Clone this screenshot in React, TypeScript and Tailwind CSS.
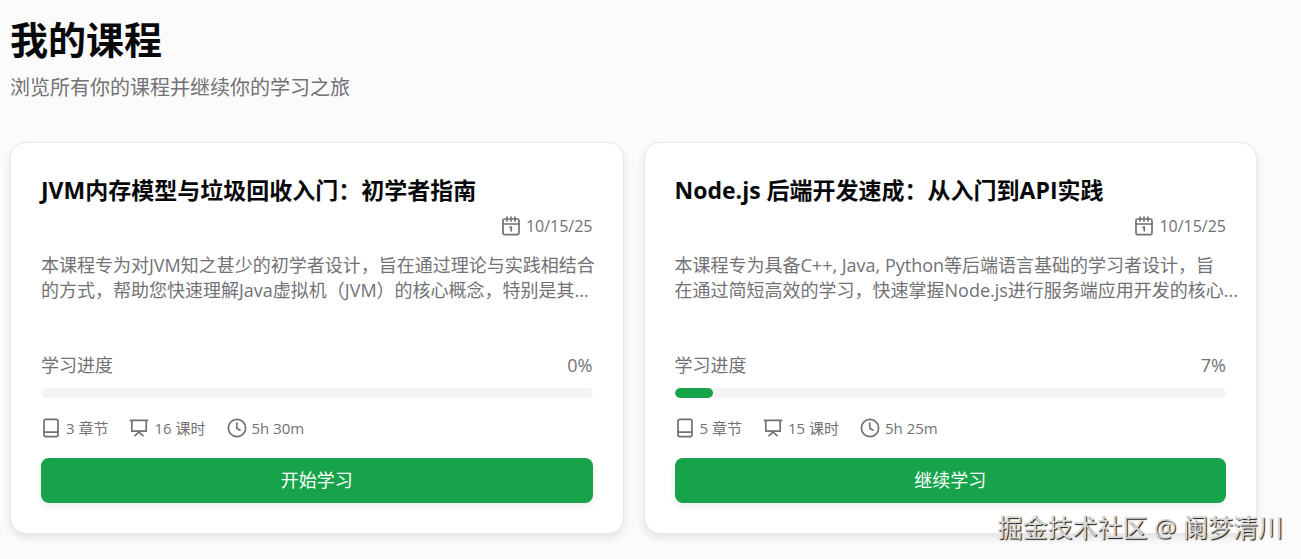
import type { ReactNode } from "react";

type Course = {
  title: string;
  date: string;
  description: string[];
  progress: number;
  chapters: number;
  lessons: number;
  duration: string;
  action: string;
};

const courses: Course[] = [
  {
    title: "JVM内存模型与垃圾回收入门：初学者指南",
    date: "10/15/25",
    description: [
      "本课程专为对JVM知之甚少的初学者设计，旨在通过理论与实践相结合",
      "的方式，帮助您快速理解Java虚拟机（JVM）的核心概念，特别是其...",
    ],
    progress: 0,
    chapters: 3,
    lessons: 16,
    duration: "5h 30m",
    action: "开始学习",
  },
  {
    title: "Node.js 后端开发速成：从入门到API实践",
    date: "10/15/25",
    description: [
      "本课程专为具备C++, Java, Python等后端语言基础的学习者设计，旨",
      "在通过简短高效的学习，快速掌握Node.js进行服务端应用开发的核心...",
    ],
    progress: 7,
    chapters: 5,
    lessons: 15,
    duration: "5h 25m",
    action: "继续学习",
  },
];

function Icon({ children }: { children: ReactNode }) {
  return (
    <svg
      viewBox="0 0 20 20"
      className="size-5 shrink-0"
      fill="none"
      stroke="currentColor"
      strokeWidth="1.7"
      strokeLinecap="round"
      strokeLinejoin="round"
      aria-hidden="true"
    >
      {children}
    </svg>
  );
}

function CalendarIcon() {
  return (
    <Icon>
      <rect x="2" y="3" width="16" height="15.6" rx="1.6" />
      <path d="M2 8h16M6 1v4M10 1v4M14 1v4" />
      <path d="M9 11.4l1.3-.3v3.7" />
    </Icon>
  );
}

function BookIcon() {
  return (
    <Icon>
      <rect x="3" y="1.4" width="14" height="17.2" rx="1.8" />
      <path d="M3 14.2h14" />
    </Icon>
  );
}

function BoardIcon() {
  return (
    <Icon>
      <path d="M1.4 2.4h17.2M2.8 2.4v10.8h14.4V2.4" />
      <path d="M10 13.2v1.2M10 14.2l-4 3.4M10 14.2l4 3.4" />
    </Icon>
  );
}

function ClockIcon() {
  return (
    <Icon>
      <circle cx="10" cy="10" r="8.6" />
      <path d="M9.8 5v5.2l3.2 2" />
    </Icon>
  );
}

function Meta({ icon, children }: { icon: ReactNode; children: ReactNode }) {
  return (
    <li className="flex items-center gap-[5px]">
      {icon}
      <span>{children}</span>
    </li>
  );
}

function CourseCard({ course }: { course: Course }) {
  return (
    <article className="rounded-2xl border border-[#e7e7e9] bg-white px-[30px] pt-[31px] pb-[30px] shadow-[0_4px_8px_rgba(0,0,0,0.1)]">
      <h2 className="text-[23px] leading-8 font-bold text-[#09090b]">{course.title}</h2>
      <p className="mt-[10px] flex h-5 items-center justify-end gap-[5px] text-[16px]">
        <CalendarIcon />
        <time>{course.date}</time>
      </p>
      <p className="mt-[17px] h-[75px] text-[18px] leading-[25px] whitespace-nowrap">
        {course.description.map((line) => (
          <span key={line} className="block">
            {line}
          </span>
        ))}
      </p>
      <div className="mt-[25px] flex justify-between text-[18px] leading-6">
        <span>学习进度</span>
        <span>{course.progress}%</span>
      </div>
      <div
        role="progressbar"
        aria-label="学习进度"
        aria-valuenow={course.progress}
        aria-valuemin={0}
        aria-valuemax={100}
        className="mt-[11px] h-[10px] overflow-hidden rounded-full bg-[#f4f4f5]"
      >
        <div className="h-full rounded-full bg-[#16a34a]" style={{ width: `${course.progress}%` }} />
      </div>
      <ul className="mt-5 flex h-5 items-center gap-[21px] text-[15px]">
        <Meta icon={<BookIcon />}>{course.chapters} 章节</Meta>
        <Meta icon={<BoardIcon />}>{course.lessons} 课时</Meta>
        <Meta icon={<ClockIcon />}>{course.duration}</Meta>
      </ul>
      <button
        type="button"
        className="mt-5 flex h-[45px] w-full items-center justify-center rounded-lg bg-[#16a34a] text-[18px] text-white shadow-[0_4px_8px_rgba(0,0,0,0.06)]"
      >
        {course.action}
      </button>
    </article>
  );
}

export default function App() {
  return (
    <div
      lang="zh-CN"
      className="relative min-h-screen bg-[#fbfbfb] pt-[17px] pr-11 pb-6 pl-[10px] font-['Open_Sans','Noto_Sans_CJK_SC',sans-serif] text-[#727276]"
    >
      <header>
        <h1 className="text-[38px] leading-[45px] font-bold text-[#09090b]">我的课程</h1>
        <p className="mt-[10px] text-[20px] leading-8">浏览所有你的课程并继续你的学习之旅</p>
      </header>
      <main className="mt-[38px] grid grid-cols-2 gap-5">
        {courses.map((course) => (
          <CourseCard key={course.title} course={course} />
        ))}
      </main>
      <p className="absolute right-[18px] bottom-[14px] text-[25px] leading-9 whitespace-nowrap text-[#d8d8d8] [text-shadow:1px_1px_1px_#111]">
        掘金技术社区 @ 阑梦清川
      </p>
    </div>
  );
}
